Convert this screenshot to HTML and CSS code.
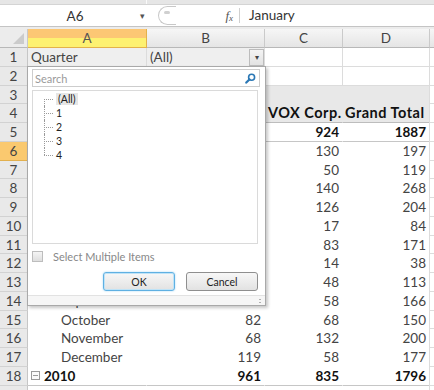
FILE: index.html
```html
<!DOCTYPE html>
<html>

<head>
    <meta charset='utf-8'>
    <title>Pivot filter</title>
    <meta name='viewport' content='width=device-width, initial-scale=1'>
    <link rel="stylesheet" href="styles.css">
</head>

<body>
    <div class="app">
        <div class="ribbon"><span class="rdiv"></span></div>
        <div class="fbar">
            <div class="namebox"><span class="ref">A6</span><span class="caret">&#9662;</span></div>
            <div class="splitter"><span class="knob"></span></div>
            <div class="fx"><i>f</i><sub>x</sub></div>
            <div class="formula">January</div>
        </div>
        <div class="gap"></div>

        <div class="sheet">
            <!-- column headers -->
            <div class="corner"><span class="tri"></span></div>
            <div class="ch sel">A</div><div class="ch">B</div><div class="ch">C</div><div class="ch">D</div><div class="ch"></div>

            <div class="rh">1</div><div class="c f">Quarter</div><div class="c f">(All)<span class="ddbtn">&#9662;</span></div><div class="c"></div><div class="c"></div><div class="c e"></div>
            <div class="rh">2</div><div class="c"></div><div class="c"></div><div class="c"></div><div class="c"></div><div class="c e"></div>
            <div class="rh">3</div><div class="c g">Sum of Sales</div><div class="c g">Column Labels</div><div class="c g"></div><div class="c g d"></div><div class="c e"></div>
            <div class="rh">4</div><div class="c g hl b">Row Labels</div><div class="c g hl b">Acme</div><div class="c g hl b">VOX Corp.</div><div class="c g hl b d">Grand Total</div><div class="c e"></div>
            <div class="rh">5</div><div class="c p yr b"><span class="tog"></span>2009</div><div class="c p yr b n">963</div><div class="c p yr b n">924</div><div class="c p yr b n d">1887</div><div class="c e"></div>
            <div class="rh cur">6</div><div class="c p m">January</div><div class="c p n">67</div><div class="c p n">130</div><div class="c p n d">197</div><div class="c e"></div>
            <div class="rh">7</div><div class="c p m">February</div><div class="c p n">69</div><div class="c p n">50</div><div class="c p n d">119</div><div class="c e"></div>
            <div class="rh">8</div><div class="c p m">March</div><div class="c p n">128</div><div class="c p n">140</div><div class="c p n d">268</div><div class="c e"></div>
            <div class="rh">9</div><div class="c p m">April</div><div class="c p n">78</div><div class="c p n">126</div><div class="c p n d">204</div><div class="c e"></div>
            <div class="rh">10</div><div class="c p m">May</div><div class="c p n">67</div><div class="c p n">17</div><div class="c p n d">84</div><div class="c e"></div>
            <div class="rh">11</div><div class="c p m">June</div><div class="c p n">88</div><div class="c p n">83</div><div class="c p n d">171</div><div class="c e"></div>
            <div class="rh">12</div><div class="c p m">July</div><div class="c p n">24</div><div class="c p n">14</div><div class="c p n d">38</div><div class="c e"></div>
            <div class="rh">13</div><div class="c p m">August</div><div class="c p n">65</div><div class="c p n">48</div><div class="c p n d">113</div><div class="c e"></div>
            <div class="rh">14</div><div class="c p m">September</div><div class="c p n">108</div><div class="c p n">58</div><div class="c p n d">166</div><div class="c e"></div>
            <div class="rh">15</div><div class="c p m">October</div><div class="c p n">82</div><div class="c p n">68</div><div class="c p n d">150</div><div class="c e"></div>
            <div class="rh">16</div><div class="c p m">November</div><div class="c p n">68</div><div class="c p n">132</div><div class="c p n d">200</div><div class="c e"></div>
            <div class="rh">17</div><div class="c p m">December</div><div class="c p n">119</div><div class="c p n">58</div><div class="c p n d">177</div><div class="c e"></div>
            <div class="rh">18</div><div class="c p yr b"><span class="tog"></span>2010</div><div class="c p yr b n">961</div><div class="c p yr b n">835</div><div class="c p yr b n d">1796</div><div class="c e"></div>
            <div class="rh">19</div><div class="c p m">January</div><div class="c p n">102</div><div class="c p n">45</div><div class="c p n d">147</div><div class="c e"></div>
        </div>

        <!-- report filter dropdown -->
        <div class="filter">
            <div class="search">
                <span class="ph">Search</span>
                <svg width="11" height="11" viewBox="0 0 11 11">
                    <circle cx="6.6" cy="4.2" r="3" fill="none" stroke="#2b78b5" stroke-width="1.6" />
                    <line x1="4.4" y1="6.4" x2="1.3" y2="9.6" stroke="#2b78b5" stroke-width="2.2" stroke-linecap="round" />
                </svg>
            </div>
            <div class="tree">
                <ul>
                    <li><span class="all">(All)</span></li>
                    <li>1</li>
                    <li>2</li>
                    <li>3</li>
                    <li>4</li>
                </ul>
            </div>
            <div class="multi"><span class="box"></span>Select Multiple Items</div>
            <div class="btns">
                <button class="btn ok">OK</button>
                <button class="btn">Cancel</button>
            </div>
            <div class="grip"><span class="dots"></span></div>
        </div>
    </div>
</body>

</html>
```

FILE: styles.css
```css
body,
html {
    margin: 0;
    padding: 0;
    width: 434px;
    height: 390px;
    overflow: hidden;
    background: #fff;
}

.app {
    position: relative;
    width: 434px;
    height: 390px;
    overflow: hidden;
    font-family: Lato, "Liberation Sans", sans-serif;
    font-size: 13.5px;
    color: #444;
}

/* formula bar */
.ribbon {
    height: 4px;
    background: #e6e6e6;
    border-bottom: 1px solid #d4d4d4;
}

.rdiv {
    display: block;
    margin-left: 146px;
    width: 1px;
    height: 4px;
    background: #fafafa;
}

.fbar {
    display: flex;
    height: 21px;
    background: #fff;
    border-bottom: 1px solid #c4c4c4;
}

.namebox {
    width: 152px;
    display: flex;
    align-items: center;
    color: #333;
}

.ref {
    flex: 1;
    text-align: center;
    padding-left: 10px;
}

.caret {
    width: 12px;
    font-size: 9px;
    color: #555;
}

.splitter {
    margin: 1px 0 0 6px;
    width: 17px;
    height: 17px;
    border: 1px solid #c8c8c8;
    border-right: none;
    border-radius: 10px 0 0 10px;
    display: flex;
    align-items: center;
    justify-content: center;
}

.knob {
    width: 6px;
    height: 3px;
    border-radius: 2px;
    background: #d0d0d0;
    margin: -6px 0 0 -2px;
}

.fx {
    width: 63px;
    text-align: right;
    padding-right: 6px;
    box-sizing: border-box;
    font-family: "Liberation Serif", serif;
    font-size: 13px;
    color: #555;
    line-height: 21px;
}

.fx sub {
    font-size: 9px;
    font-style: italic;
    vertical-align: -1px;
}

.formula {
    flex: 1;
    border-left: 1px solid #d0d0d0;
    margin: 3px 0;
    padding-left: 9px;
    line-height: 15px;
    color: #333;
}

.gap {
    height: 2px;
    background: #ececec;
}

/* grid */
.sheet {
    display: grid;
    grid-template-columns: 28px 119px 118px 78px 87px 10px;
    grid-template-rows: 19px repeat(19, 18.75px);
}

.corner {
    background: #ececec;
    border-right: 1px solid #c8c8c8;
    border-bottom: 1px solid #b8b8b8;
    display: flex;
    align-items: flex-end;
    justify-content: flex-end;
    padding: 0 3px 3px 0;
}

.tri {
    width: 0;
    height: 0;
    border-left: 11px solid transparent;
    border-bottom: 11px solid #cbcbcb;
}

.ch {
    background: linear-gradient(#f6f6f6, #e5e5e5);
    border-right: 1px solid #cacaca;
    border-bottom: 1px solid #b8b8b8;
    text-align: center;
    line-height: 18px;
    color: #444;
    font-size: 13.5px;
}

.ch.sel {
    background: linear-gradient(#fcc774 0, #fcc774 50%, #fdf171 50%, #fdf171 100%);
    border-color: #e3b24a;
    color: #555;
}

.rh {
    background: #e9e9e9;
    border-right: 1px solid #c6c6c6;
    border-bottom: 1px solid #d2d2d2;
    text-align: center;
    color: #444;
    font-size: 13.5px;
    line-height: 18px;
}

.rh.cur {
    background: #fac96f;
    border-bottom-color: #e2b04e;
}

.c {
    border-right: 1px solid #dcdcdc;
    border-bottom: 1px solid #dcdcdc;
    padding: 0 3px;
    line-height: 18px;
    white-space: nowrap;
    overflow: hidden;
    position: relative;
}

.c.e {
    border-right: none;
    border-left: 1px solid #dcdcdc;
    margin-left: -1px;
}

.f {
    background: #efefef;
}

.ddbtn {
    position: absolute;
    right: 0;
    top: 1px;
    width: 13px;
    height: 15px;
    border: 1px solid #bcbcbc;
    background: linear-gradient(#f4f4f4, #e2e2e2);
    font-size: 8px;
    line-height: 15px;
    text-align: center;
    color: #444;
}

.g {
    background: #e8e8e8;
    border-right-color: transparent;
    border-bottom-color: transparent;
}

.hl {
    border-bottom: 1px solid #bdbdbd;
    font-size: 14.5px;
    letter-spacing: 0.5px;
}

.p {
    border-right-color: transparent;
    border-bottom-color: transparent;
}

.c.d {
    border-right-color: #dcdcdc;
}

.c.hl.d {
    padding-left: 2px;
}

.yr {
    border-bottom: 1px solid #c6c6c6;
}

.b {
    font-weight: bold;
    color: #111;
}

.n {
    text-align: right;
}

.m {
    padding-left: 33px;
}

.tog {
    display: inline-block;
    width: 7px;
    height: 7px;
    border: 1px solid #9a9a9a;
    margin: 0 4px 0 0;
    vertical-align: 1px;
    background: linear-gradient(#9a9a9a, #9a9a9a) center / 5px 1px no-repeat, #fafafa;
}

/* filter dropdown */
.filter {
    position: absolute;
    left: 27px;
    top: 66px;
    width: 239px;
    height: 240px;
    box-sizing: border-box;
    border: 1px solid #a9a9a9;
    background: #fff;
    box-shadow: 2px 2px 3px rgba(0, 0, 0, 0.22);
    padding: 2px 5px 0 4px;
    display: flex;
    flex-direction: column;
    font-size: 10.5px;
}

.search {
    height: 18px;
    box-sizing: border-box;
    border: 1px solid #cdcdcd;
    display: flex;
    align-items: center;
    justify-content: space-between;
    padding: 0 3px 0 2px;
}

.ph {
    color: #9a9a9a;
    font-size: 11px;
}

.tree {
    margin-top: 3px;
    height: 154px;
    box-sizing: border-box;
    border: 1px solid #dadada;
    margin-right: 2px;
}

.tree ul {
    list-style: none;
    margin: 1px 0 0 0;
    padding: 0;
}

.tree li {
    position: relative;
    padding-left: 23px;
    height: 14px;
    line-height: 14px;
    color: #222;
}

.tree li::before {
    content: '';
    position: absolute;
    left: 11px;
    top: 7px;
    width: 9px;
    border-top: 1px dotted #9a9a9a;
}

.tree li::after {
    content: '';
    position: absolute;
    left: 11px;
    top: 0;
    bottom: 0;
    border-left: 1px dotted #9a9a9a;
}

.tree li:first-child::after {
    top: 7px;
}

.tree li:last-child::after {
    bottom: auto;
    height: 7px;
}

.all {
    background: #e6e6e6;
    padding: 0 2px;
}

.multi {
    margin-top: 6px;
    height: 12px;
    display: flex;
    align-items: center;
    color: #888;
    font-size: 11px;
}

.box {
    width: 9px;
    height: 9px;
    border: 1px solid #bdbdbd;
    background: linear-gradient(#f5f5f5, #dedede);
    margin-right: 10px;
}

.btns {
    margin-top: 10px;
    display: flex;
    justify-content: flex-end;
    gap: 11px;
    padding-right: 2px;
}

.btn {
    width: 72px;
    height: 19px;
    box-sizing: border-box;
    border: 1px solid #8f8f8f;
    border-radius: 3px;
    background: linear-gradient(#f7f7f7, #e2e2e2);
    font-family: Lato, "Liberation Sans", sans-serif;
    font-size: 10.5px;
    color: #222;
    padding: 0;
}

.btn.ok {
    border-color: #5fb0e2;
    box-shadow: inset 0 0 0 1px #bfe3f7, 0 0 2px #9fd4f2;
}

.grip {
    margin: 4px -5px 0 -4px;
    flex: 1;
    border-top: 1px solid #e2e2e2;
    background: #f6f6f6;
    display: flex;
    justify-content: flex-end;
    align-items: center;
    padding-right: 4px;
}

.dots {
    width: 2px;
    height: 6px;
    background: radial-gradient(circle, #b0b0b0 0.8px, transparent 1px) 0 0 / 2px 3px;
}
```
